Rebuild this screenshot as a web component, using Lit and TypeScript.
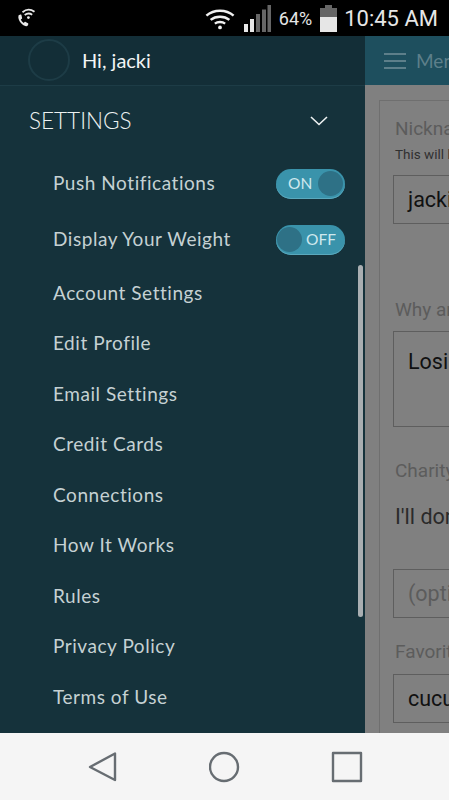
import { LitElement, css, html } from "lit";
import { customElement } from "lit/decorators.js";

const LINKS = [
  "Account Settings",
  "Edit Profile",
  "Email Settings",
  "Credit Cards",
  "Connections",
  "How It Works",
  "Rules",
  "Privacy Policy",
  "Terms of Use",
];

@customElement("app-root")
export class AppRoot extends LitElement {
  static styles = css`
    :host {
      display: block;
      width: 449px;
      height: 800px;
      overflow: hidden;
      font-family: Lato, "Open Sans", sans-serif;
      background: #000;
    }
    .status {
      height: 36px;
      background: #000;
      display: flex;
      align-items: center;
      color: #e6e6e6;
      font-family: Roboto, sans-serif;
    }
    .call {
      margin-left: 15px;
      display: block;
    }
    .status-right {
      margin-left: auto;
      display: flex;
      align-items: center;
      padding-right: 11px;
    }
    .wifi {
      display: block;
      margin-right: 9px;
    }
    .bars {
      display: block;
      margin-right: 8px;
    }
    .pct {
      font-size: 18px;
      margin-right: 8px;
    }
    .batt {
      display: block;
      margin-right: 7px;
    }
    .time {
      font-size: 22px;
    }
    .main {
      height: 697px;
      display: flex;
      overflow: hidden;
    }
    .drawer {
      width: 365px;
      flex: none;
      background: #15323b;
      position: relative;
    }
    .hello {
      height: 50px;
      box-sizing: border-box;
      border-bottom: 1px solid #1d3c46;
      background: #132e37;
      display: flex;
      align-items: center;
      padding: 0 0 2px 28px;
      gap: 12px;
      color: #f2f5f5;
      font-size: 20px;
    }
    .avatar {
      width: 42px;
      height: 42px;
      box-sizing: border-box;
      border: 2px solid #1d3c46;
      border-radius: 50%;
    }
    .section {
      height: 69px;
      display: flex;
      align-items: center;
      justify-content: space-between;
      padding: 0 37px 0 29px;
      color: #eef2f2;
      font-size: 22.5px;
      font-weight: 300;
    }
    .section svg {
      display: block;
    }
    .rows {
      padding: 0 20px 0 53px;
      color: #c5d1d3;
      font-size: 19px;
      letter-spacing: 0.55px;
    }
    .toggle-row {
      height: 56px;
      margin-top: -1px;
      display: flex;
      align-items: center;
      justify-content: space-between;
    }
    .toggle-row + .toggle-row {
      margin-top: 0;
      margin-bottom: 1px;
    }
    .toggle {
      width: 69px;
      height: 30px;
      margin-top: 3px;
      box-sizing: border-box;
      padding: 2px 2px 3px 1px;
      border-radius: 15px;
      background: #3a93ab;
      box-shadow: inset 0 -1px 0 #5aa9bd;
      display: flex;
      align-items: center;
      justify-content: space-between;
      color: #cfe8ee;
      font-size: 15.5px;
      letter-spacing: 0;
    }
    .toggle span {
      margin: 0 5px 0 11px;
    }
    .toggle.off span {
      margin: 0 7px 0 0;
    }
    .knob {
      width: 25px;
      height: 25px;
      border-radius: 50%;
      background: #2e7186;
    }
    .link {
      height: 50.5px;
      display: flex;
      align-items: center;
    }
    .scrollbar {
      position: absolute;
      left: 358px;
      top: 229px;
      width: 5px;
      height: 352px;
      border-radius: 3px;
      background: #a9afb2;
    }
    .content {
      flex: 1;
      min-width: 0;
      background: #808080;
      font-family: Roboto, sans-serif;
    }
    .bar {
      height: 49px;
      background: #1e4f5e;
      display: flex;
      align-items: center;
      padding-left: 19px;
      gap: 10px;
      color: #5d7f8a;
      font-family: Lato, sans-serif;
      font-size: 19px;
      white-space: nowrap;
    }
    .bar svg {
      display: block;
      flex: none;
    }
    .card {
      margin: 15px 0 0 14px;
      width: 200px;
      height: 700px;
      box-sizing: border-box;
      border: 1px solid #6f6f6f;
      padding: 16px 0 0 13px;
      color: #5c5c5c;
      font-size: 19px;
      white-space: nowrap;
    }
    .label {
      line-height: 24px;
      padding-left: 2px;
    }
    .hint {
      font-size: 13.5px;
      line-height: 16px;
      margin-top: 5px;
      padding-left: 2px;
      color: #303030;
    }
    .field {
      box-sizing: border-box;
      border: 1px solid #5e5e5e;
      height: 49px;
      padding: 12px 0 0 14px;
      font-size: 21.5px;
      line-height: 24px;
      color: #111;
    }
    .first {
      margin-top: 13px;
    }
    .why {
      margin-top: 74px;
    }
    .area {
      margin-top: 9px;
      height: 96px;
      padding-top: 18px;
    }
    .charity {
      margin-top: 32px;
    }
    .donate {
      margin-top: 22px;
      padding-left: 2px;
      font-size: 21.5px;
      line-height: 24px;
      color: #2a2a2a;
    }
    .optional {
      margin-top: 40px;
      color: #5c5c5c;
    }
    .fav {
      margin-top: 22px;
    }
    .fav + .field {
      margin-top: 10px;
    }
    .nav {
      height: 67px;
      background: #f5f5f5;
      display: grid;
      grid-template-columns: repeat(3, 122px);
      justify-content: center;
      justify-items: center;
      align-items: center;
    }
    .nav svg {
      display: block;
    }
  `;

  render() {
    return html`
      <div class="status">
        <svg class="call" width="24" height="24" viewBox="0 0 24 24" fill="none">
          <path d="M3.5 9.5c-.6 2.5.4 5.3 2.4 7.6 1.7 1.9 3.4 2.9 5.1 3.2.9.1 1.6-.3 1.9-1l.4-1.1c.1-.4 0-.7-.3-.9l-2.4-1.4c-.4-.2-.7-.1-1 .2l-.8.9c-1.3-.8-2.4-2.1-3-3.5l1-.7c.3-.2.4-.6.3-.9L6.4 9c-.2-.4-.6-.5-1-.4l-1.2.3c-.3.1-.6.3-.7.6z" fill="#e8e8e8" />
          <path d="M7.5 6.2C11 3.2 15.6 3 19.5 5.8M9.7 9c2.3-1.8 5.2-1.9 7.5-.3" stroke="#e8e8e8" stroke-width="1.8" />
          <circle cx="13.4" cy="11.6" r="1.4" fill="#e8e8e8" />
        </svg>
        <div class="status-right">
          <svg class="wifi" width="30" height="24" viewBox="0 0 32 24" fill="none">
            <path d="M1.5 9.5C9.5 2.5 22.5 2.5 30.5 9.500M6 14c5.500-4.500 14.500-4.500 20 0M10.500 18c3-2.200 8-2.200 11 0" stroke="#f0f0f0" stroke-width="2.600" />
            <circle cx="16" cy="22" r="2" fill="#f0f0f0" />
          </svg>
          <svg class="bars" width="27" height="27" viewBox="0 0 27 27">
            <rect x="0" y="19" width="4" height="8" fill="#e8e8e8" />
            <rect x="6" y="14" width="4" height="13" fill="#e8e8e8" />
            <rect x="12" y="9" width="4" height="18" fill="#666" />
            <rect x="18" y="4.500" width="4" height="22.500" fill="#666" />
            <rect x="23.500" y="0" width="3.500" height="27" fill="#666" />
          </svg>
          <span class="pct">64%</span>
          <svg class="batt" width="17" height="27" viewBox="0 0 17 27">
            <rect x="5" y="0" width="7" height="3" fill="#666" />
            <rect x="0" y="3" width="17" height="9" fill="#666" />
            <rect x="0" y="12" width="17" height="15" fill="#e6e6e6" />
          </svg>
          <span class="time">10:45 AM</span>
        </div>
      </div>
      <div class="main">
        <div class="drawer">
          <div class="hello"><div class="avatar"></div>Hi, jacki</div>
          <div class="section">
            SETTINGS
            <svg width="18" height="10" viewBox="0 0 18 10" fill="none">
              <path d="M1 1l8 7.500L17 1" stroke="#eef2f2" stroke-width="1.600" />
            </svg>
          </div>
          <div class="rows">
            <div class="toggle-row">
              Push Notifications
              <div class="toggle"><span>ON</span><div class="knob"></div></div>
            </div>
            <div class="toggle-row">
              Display Your Weight
              <div class="toggle off"><div class="knob"></div><span>OFF</span></div>
            </div>
            ${LINKS.map((l) => html`<div class="link">${l}</div>`)}
          </div>
          <div class="scrollbar"></div>
        </div>
        <div class="content">
          <div class="bar">
            <svg width="22" height="18" viewBox="0 0 22 18">
              <rect y="1" width="22" height="2" fill="#5d7f8a" />
              <rect y="8" width="22" height="2" fill="#5d7f8a" />
              <rect y="15" width="22" height="2" fill="#5d7f8a" />
            </svg>
            Menu
          </div>
          <div class="card">
            <div class="label">Nickname</div>
            <div class="hint">This will be shown</div>
            <div class="field first">jacki</div>
            <div class="label why">Why are you</div>
            <div class="field area">Losing weight</div>
            <div class="label charity">Charity</div>
            <div class="donate">I'll donate</div>
            <div class="field optional">(optional)</div>
            <div class="label fav">Favorite</div>
            <div class="field">cucumber</div>
          </div>
        </div>
      </div>
      <div class="nav">
        <svg width="30" height="32" viewBox="0 0 30 32" fill="none">
          <path d="M27 2.500V29L2 16z" stroke="#676d72" stroke-width="2.400" stroke-linejoin="round" />
        </svg>
        <svg width="32" height="32" viewBox="0 0 32 32" fill="none">
          <circle cx="15" cy="16" r="14" stroke="#676d72" stroke-width="2.400" />
        </svg>
        <svg width="32" height="32" viewBox="0 0 32 32" fill="none">
          <rect x="2" y="2" width="28" height="28" stroke="#676d72" stroke-width="2.400" stroke-linejoin="round" />
        </svg>
      </div>
    `;
  }
}
